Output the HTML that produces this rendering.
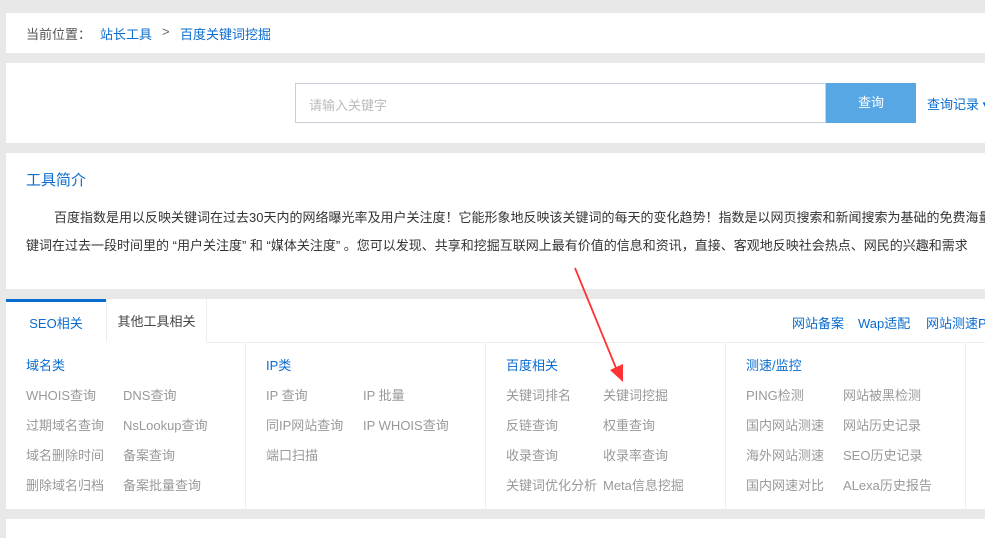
<!DOCTYPE html>
<html><head><meta charset="utf-8"><style>
*{margin:0;padding:0;box-sizing:border-box}
body{width:985px;height:538px;overflow:hidden;background:#e8e8e8;font-family:"Liberation Sans","Noto Sans CJK SC",sans-serif;font-size:13px;color:#666;position:relative}
.p{position:absolute;left:6px;right:0;background:#fff}
.a{position:absolute;white-space:nowrap}
.b{color:#0a6ccf}
.g{color:#999;font-size:13px}
</style></head><body>
<div class="p" style="top:13px;height:40px"></div>
<div class="a" style="left:26px;top:24px;color:#555">当前位置：</div>
<div class="a b" style="left:100px;top:24px">站长工具</div>
<div class="a" style="left:162px;top:24px;color:#666">&gt;</div>
<div class="a b" style="left:180px;top:24px">百度关键词挖掘</div>

<div class="p" style="top:63px;height:80px"></div>
<div class="a" style="left:295px;top:83px;width:531px;height:40px;border:1px solid #c9ced8"></div>
<div class="a" style="left:309px;top:95px;color:#bbb">请输入关键字</div>
<div class="a" style="left:826px;top:83px;width:90px;height:40px;background:#56a7e4;color:#fff;text-align:center;line-height:40px">查询</div>
<div class="a b" style="left:927px;top:94px">查询记录 ▾</div>

<div class="p" style="top:153px;height:136px;overflow:hidden"></div>
<div class="a b" style="left:26px;top:169px;font-size:15px">工具简介</div>
<div class="a" style="left:54px;top:207px;color:#333">百度指数是用以反映关键词在过去30天内的网络曝光率及用户关注度！它能形象地反映该关键词的每天的变化趋势！指数是以网页搜索和新闻搜索为基础的免费海量</div>
<div class="a" style="left:26px;top:235px;color:#333">键词在过去一段时间里的 “用户关注度” 和 “媒体关注度” 。您可以发现、共享和挖掘互联网上最有价值的信息和资讯，直接、客观地反映社会热点、网民的兴趣和需求</div>

<div class="p" style="top:299px;height:210px"></div>
<div class="a" style="left:207px;top:342px;width:778px;height:1px;background:#eee"></div>
<div class="a" style="left:6px;top:299px;width:100px;height:44px;border-top:3px solid #0a6ccf;background:#fff;text-align:center;line-height:44px;color:#0a6ccf">SEO相关</div>
<div class="a" style="left:106px;top:299px;width:101px;height:43px;border-left:1px solid #eee;border-right:1px solid #eee;text-align:center;line-height:46px;color:#444">其他工具相关</div>
<div class="a b" style="left:792px;top:313px">网站备案</div>
<div class="a b" style="left:858px;top:313px">Wap适配</div>
<div class="a b" style="left:926px;top:313px">网站测速PC</div>
<div class="a" style="left:245px;top:343px;width:1px;height:166px;background:#eee"></div>
<div class="a" style="left:485px;top:343px;width:1px;height:166px;background:#eee"></div>
<div class="a" style="left:725px;top:343px;width:1px;height:166px;background:#eee"></div>
<div class="a" style="left:965px;top:343px;width:1px;height:166px;background:#eee"></div>

<div class="a b" style="left:26px;top:355px">域名类</div>
<div class="a g" style="left:26px;top:385px">WHOIS查询</div><div class="a g" style="left:123px;top:385px">DNS查询</div>
<div class="a g" style="left:26px;top:415px">过期域名查询</div><div class="a g" style="left:123px;top:415px">NsLookup查询</div>
<div class="a g" style="left:26px;top:445px">域名删除时间</div><div class="a g" style="left:123px;top:445px">备案查询</div>
<div class="a g" style="left:26px;top:475px">删除域名归档</div><div class="a g" style="left:123px;top:475px">备案批量查询</div>

<div class="a b" style="left:266px;top:355px">IP类</div>
<div class="a g" style="left:266px;top:385px">IP 查询</div><div class="a g" style="left:363px;top:385px">IP 批量</div>
<div class="a g" style="left:266px;top:415px">同IP网站查询</div><div class="a g" style="left:363px;top:415px">IP WHOIS查询</div>
<div class="a g" style="left:266px;top:445px">端口扫描</div>

<div class="a b" style="left:506px;top:355px">百度相关</div>
<div class="a g" style="left:506px;top:385px">关键词排名</div><div class="a g" style="left:603px;top:385px">关键词挖掘</div>
<div class="a g" style="left:506px;top:415px">反链查询</div><div class="a g" style="left:603px;top:415px">权重查询</div>
<div class="a g" style="left:506px;top:445px">收录查询</div><div class="a g" style="left:603px;top:445px">收录率查询</div>
<div class="a g" style="left:506px;top:475px">关键词优化分析</div><div class="a g" style="left:603px;top:475px">Meta信息挖掘</div>

<div class="a b" style="left:746px;top:355px">测速/监控</div>
<div class="a g" style="left:746px;top:385px">PING检测</div><div class="a g" style="left:843px;top:385px">网站被黑检测</div>
<div class="a g" style="left:746px;top:415px">国内网站测速</div><div class="a g" style="left:843px;top:415px">网站历史记录</div>
<div class="a g" style="left:746px;top:445px">海外网站测速</div><div class="a g" style="left:843px;top:445px">SEO历史记录</div>
<div class="a g" style="left:746px;top:475px">国内网速对比</div><div class="a g" style="left:843px;top:475px">ALexa历史报告</div>

<div class="p" style="top:519px;height:19px"></div>

<svg class="a" style="left:0;top:0" width="985" height="538">
<path d="M575 268 L616 368" stroke="#f33" stroke-width="1.8" fill="none"/>
<path d="M610 370 L623 382 L623 364 Z" fill="#f33"/>
</svg>
</body></html>
